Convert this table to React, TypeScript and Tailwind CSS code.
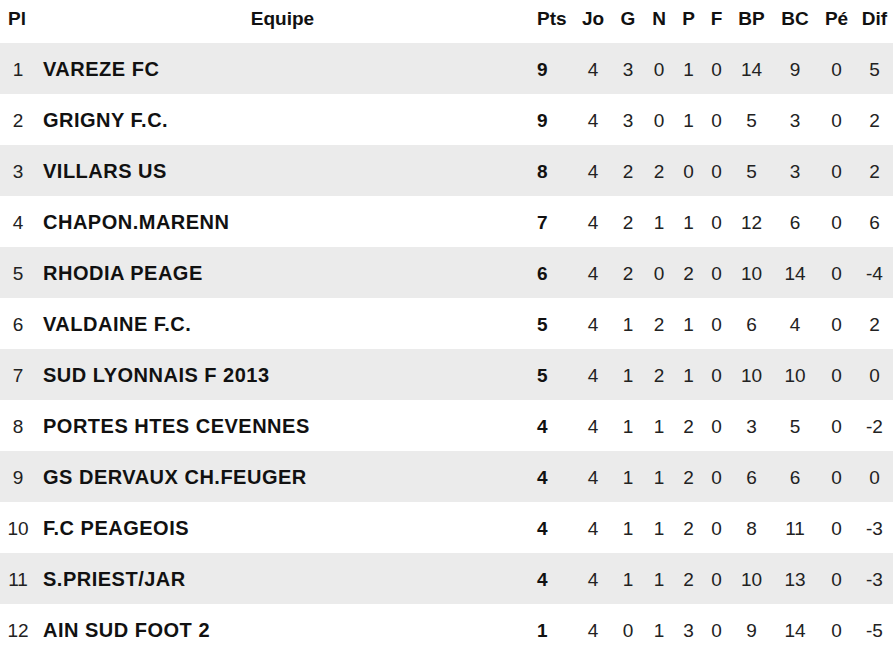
type Row = {
  pl: number
  team: string
  pts: number
  jo: number
  g: number
  n: number
  p: number
  f: number
  bp: number
  bc: number
  pe: number
  dif: number
}

const rows: Row[] = [
  { pl: 1, team: 'VAREZE FC', pts: 9, jo: 4, g: 3, n: 0, p: 1, f: 0, bp: 14, bc: 9, pe: 0, dif: 5 },
  { pl: 2, team: 'GRIGNY F.C.', pts: 9, jo: 4, g: 3, n: 0, p: 1, f: 0, bp: 5, bc: 3, pe: 0, dif: 2 },
  { pl: 3, team: 'VILLARS US', pts: 8, jo: 4, g: 2, n: 2, p: 0, f: 0, bp: 5, bc: 3, pe: 0, dif: 2 },
  { pl: 4, team: 'CHAPON.MARENN', pts: 7, jo: 4, g: 2, n: 1, p: 1, f: 0, bp: 12, bc: 6, pe: 0, dif: 6 },
  { pl: 5, team: 'RHODIA PEAGE', pts: 6, jo: 4, g: 2, n: 0, p: 2, f: 0, bp: 10, bc: 14, pe: 0, dif: -4 },
  { pl: 6, team: 'VALDAINE F.C.', pts: 5, jo: 4, g: 1, n: 2, p: 1, f: 0, bp: 6, bc: 4, pe: 0, dif: 2 },
  { pl: 7, team: 'SUD LYONNAIS F 2013', pts: 5, jo: 4, g: 1, n: 2, p: 1, f: 0, bp: 10, bc: 10, pe: 0, dif: 0 },
  { pl: 8, team: 'PORTES HTES CEVENNES', pts: 4, jo: 4, g: 1, n: 1, p: 2, f: 0, bp: 3, bc: 5, pe: 0, dif: -2 },
  { pl: 9, team: 'GS DERVAUX CH.FEUGER', pts: 4, jo: 4, g: 1, n: 1, p: 2, f: 0, bp: 6, bc: 6, pe: 0, dif: 0 },
  { pl: 10, team: 'F.C PEAGEOIS', pts: 4, jo: 4, g: 1, n: 1, p: 2, f: 0, bp: 8, bc: 11, pe: 0, dif: -3 },
  { pl: 11, team: 'S.PRIEST/JAR', pts: 4, jo: 4, g: 1, n: 1, p: 2, f: 0, bp: 10, bc: 13, pe: 0, dif: -3 },
  { pl: 12, team: 'AIN SUD FOOT 2', pts: 1, jo: 4, g: 0, n: 1, p: 3, f: 0, bp: 9, bc: 14, pe: 0, dif: -5 },
]

// colonnes : Pl | Equipe | Pts | Jo | G | N | P | F | BP | BC | Pé | Dif
const cols = 'grid grid-cols-[36px_493px_45px_38px_32px_30px_29px_27px_43px_44px_39px_37px]'

export default function App() {
  return (
    <div className="w-[893px] h-[653px] overflow-hidden bg-white font-['Liberation_Sans',Arial,sans-serif] text-[19px]">
      {/* en-tête */}
      <div className={`${cols} h-[43px] items-start pt-[8px] font-bold text-[#111] leading-[21px]`}>
        <div className="pl-2">Pl</div>
        <div className="text-center">Equipe</div>
        <div className="pl-2">Pts</div>
        <div className="text-center">Jo</div>
        <div className="text-center">G</div>
        <div className="text-center">N</div>
        <div className="text-center">P</div>
        <div className="text-center">F</div>
        <div className="text-center">BP</div>
        <div className="text-center">BC</div>
        <div className="text-center">Pé</div>
        <div className="text-center">Dif</div>
      </div>

      {rows.map((r, i) => (
        <div
          key={r.pl}
          className={`${cols} h-[51px] items-center pt-[2px] leading-[21px] text-[#222] ${i % 2 === 0 ? 'bg-[#ebebeb]' : 'bg-white'}`}
        >
          <div className="text-center">{r.pl}</div>
          <div className="pl-[7px] font-bold text-[#111] text-[20px] tracking-[0.5px]">{r.team}</div>
          <div className="pl-2 font-bold text-[#111]">{r.pts}</div>
          <div className="text-center">{r.jo}</div>
          <div className="text-center">{r.g}</div>
          <div className="text-center">{r.n}</div>
          <div className="text-center">{r.p}</div>
          <div className="text-center">{r.f}</div>
          <div className="text-center">{r.bp}</div>
          <div className="text-center">{r.bc}</div>
          <div className="text-center">{r.pe}</div>
          <div className="text-center">{r.dif}</div>
        </div>
      ))}
    </div>
  )
}
